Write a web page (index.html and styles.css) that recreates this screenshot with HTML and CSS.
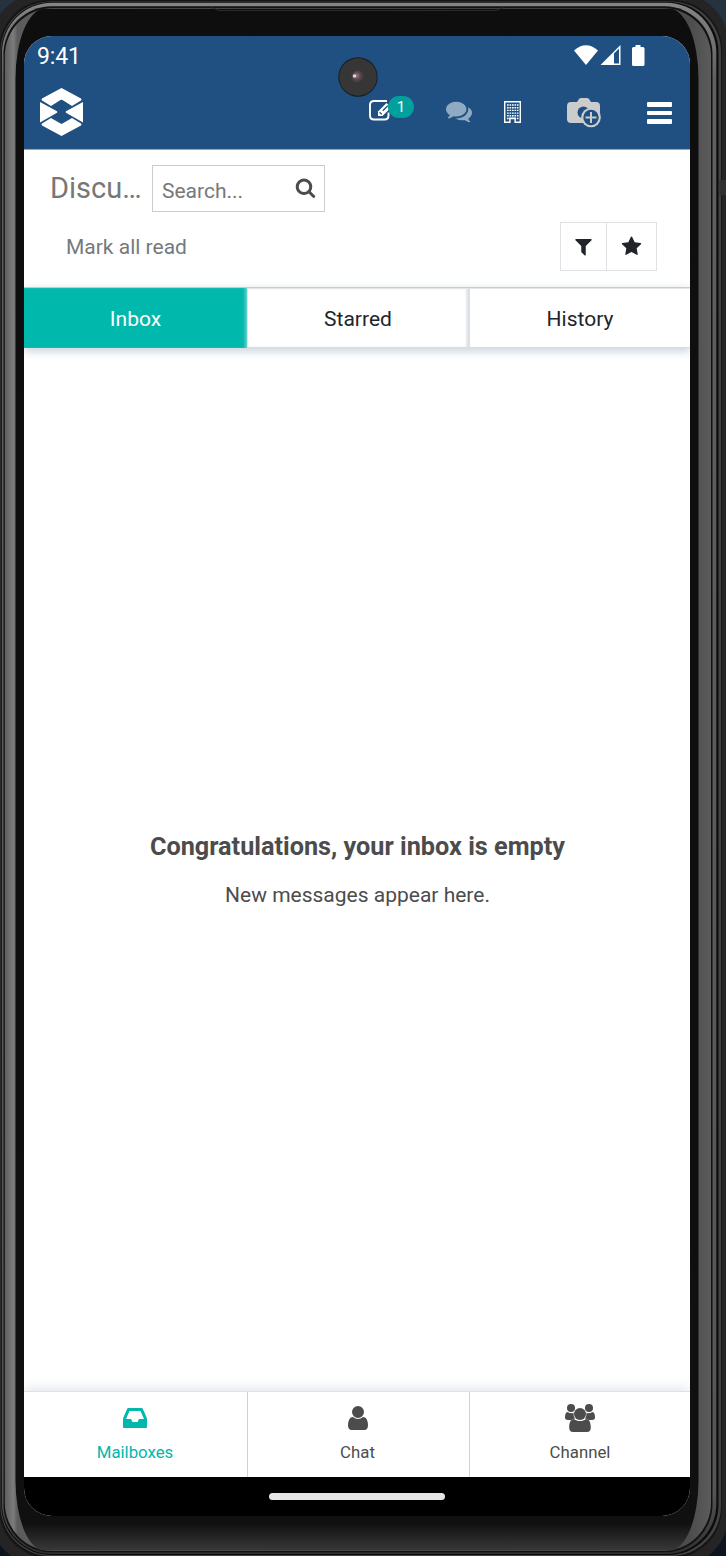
FILE: index.html
```html
<!DOCTYPE html>
<html lang="en">
<head>
<meta charset="utf-8">
<title>Discuss</title>
<link rel="stylesheet" href="styles.css">
</head>
<body>
<div class="device">
  <svg class="frame" viewBox="0 0 726 1556" aria-hidden="true">
    <defs>
      <linearGradient id="side" x1="0" x2="1" y1="0" y2="0">
        <stop offset="0" stop-color="#5e5e5e"/><stop offset=".012" stop-color="#7c7c7c"/><stop offset=".018" stop-color="#5c5c5c"/>
        <stop offset=".97" stop-color="#4c4c4c"/><stop offset="1" stop-color="#5c5c5c"/>
      </linearGradient>
      <linearGradient id="bezel" x1="0" x2="0" y1="0" y2="1">
        <stop offset="0" stop-color="#0e0e0e"/><stop offset=".982" stop-color="#101010"/><stop offset="1" stop-color="#383838"/>
      </linearGradient>
      <linearGradient id="rim" x1="0" x2="0" y1="0" y2="1">
        <stop offset="0" stop-color="#858585"/><stop offset=".05" stop-color="#606060"/><stop offset=".96" stop-color="#555"/><stop offset="1" stop-color="#303030"/>
      </linearGradient>
    </defs>
    <rect x="-9" y="-7" width="737" height="1573" rx="50" fill="#242424"/>
    <rect x="-1" y="0" width="723" height="1558" rx="50" fill="#151515"/>
    <rect x="0.5" y="1.5" width="720.5" height="1554.5" rx="50" fill="#424242"/>
    <rect x="1.3" y="2" width="717.2" height="1553" rx="50" fill="#0c0c0c"/>
    <rect x="2" y="2.7" width="714.3" height="1551.3" rx="50" fill="url(#rim)"/>
    <rect x="3.5" y="6.3" width="709" height="1546" rx="48" fill="#121212"/>
    <rect x="4.8" y="8" width="706.2" height="1543" rx="48" fill="url(#side)"/>
    <rect x="15.5" y="8.8" width="683" height="1541.7" rx="29" ry="70" fill="url(#bezel)"/>
    <path d="M211 8h3l4 2.5h279l4-2.5h3" fill="none" stroke="#2b2b2b"/>
    <path d="M719.5 180h6.5v15h-6.5z" fill="#303030"/>
  </svg>
  <div class="screen">
    <header class="header">
      <div class="status">
        <span class="clock">9:41</span>
        <svg class="status-icons" viewBox="0 0 72 24">
          <path d="M0 6.5Q12-4 24 6.5L12 21Z"/>
          <path d="M26.500 21L46.500 1V21Z"/>
          <path class="signal-gap" d="M40 9.500L45 4.500V19.500H40Z"/>
          <path d="M61.500 1h5v2h2.500q1.500 0 1.500 1.500v16q0 1.500-1.500 1.500h-9.500q-1.500 0-1.500-1.500v-16q0-1.500 1.500-1.500h2Z"/>
        </svg>
      </div>
      <nav class="nav">
        <svg class="logo" viewBox="0 0 43 48">
          <path d="M21.500 0L41 10.500Q42 11.500 41 12.500L32 18L22.500 12Q21.500 11.500 20.500 12L11 18L2 12.500Q1 11.500 2 10.500Z"/>
          <path d="M21.500 48L41 37.500Q42 36.500 41 35.500L32 30L22.500 35.500Q21.500 36 20.500 35.500L11 30L2 35.500Q1 36.500 2 37.500Z"/>
          <path d="M0 14L17 23.200Q17.700 24 17 24.700L0 34.500ZM43 14L26 23.200Q25.300 24 26 24.700L43 34.500Z"/>
        </svg>
        <div class="note">
          <svg class="edit" viewBox="0 0 23 22">
            <path class="line" d="M18 1H5Q1 1 1 5v10.500Q1 19.500 5 19.500h10.500Q19.500 19.500 19.500 15.500v-3"/>
            <path d="M9 11.500L17.500 3l4.500 4.500L13.500 16H9Z"/>
            <path class="detail" d="M10.600 12.200l2.200 2.200M13.800 10.800l5-5"/>
          </svg>
          <span class="badge">1</span>
        </div>
        <svg class="comments" viewBox="0 0 1792 1792"><path d="M1408 768q0 139-94 257t-256.500 186.500-353.500 68.500q-86 0-176-16-124 88-278 128-36 9-86 16h-3q-11 0-20.500-8t-11.500-21q-1-3-1-6.500t.5-6.500 2-6l2.500-5 3.500-5.500 4-5 4.500-5 4-4.500q5-6 23-25t26-29.500 22.500-29 25-38.500 20.500-44q-124-72-195-177t-71-224q0-139 94-257t256.500-186.500 353.500-68.500 353.500 68.500 256.500 186.500 94 257zm384 256q0 120-71 224.500t-195 176.500q10 24 20.500 44t25 38.500 22.500 29 26 29.500 23 25q1 1 4 4.500t4.500 5 4 5 3.500 5.500l2.500 5 2 6 .5 6.500-1 6.500q-3 14-13 22t-22 7q-50-7-86-16-154-40-278-128-90 16-176 16-271 0-472-132 58 4 88 4 161 0 309-45t264-129q125-92 192-212t67-254q0-77-23-152 129 71 204 178t75 230z"/></svg>
        <svg class="building" viewBox="0 0 17 22">
          <path class="wall" d="M.7 .7h15.600v20.600H.7Z"/>
          <path class="windows" d="M3 4h11.500M3 6.700h11.500M3 9.400h11.500M3 12.100h11.500M3 14.800h11.500M3 17.500h11.500"/>
          <path d="M5.200 16.600h6.600V22H5.200Z"/><path class="hole" d="M6.600 18.300h3.800V22H6.600Z"/>
        </svg>
        <svg class="camera" viewBox="0 0 34 30">
          <path d="M4 4h6l2-3q.7-1 2-1h6q1.300 0 2 1l2 3h5q4 0 4 4v13q0 4-4 4H4q-4 0-4-4V8q0-4 4-4Z"/>
          <circle class="hole" cx="16.500" cy="14.500" r="6"/>
          <circle cx="24" cy="19.500" r="9.800"/><circle class="hole" cx="24" cy="19.500" r="7.700"/>
          <path class="plus" d="M24 14v11M18.500 19.500h11"/>
        </svg>
        <div class="burger"><i></i><i></i><i></i></div>
      </nav>
    </header>
    <section class="controls">
      <div class="search-row">
        <h1 class="title">Discu…</h1>
        <div class="search"><span>Search...</span>
          <svg viewBox="0 0 1792 1792"><path d="M1216 832q0-185-131.500-316.500t-316.500-131.500-316.500 131.500-131.500 316.500 131.500 316.500 316.500 131.500 316.500-131.500 131.500-316.500zm512 832q0 52-38 90t-90 38q-54 0-90-38l-343-342q-179 124-399 124-143 0-273.500-55.500t-225-150-150-225-55.500-273.500 55.500-273.500 150-225 225-150 273.500-55.500 273.500 55.500 225 150 150 225 55.500 273.500q0 220-124 399l343 343q37 37 37 90z"/></svg>
        </div>
      </div>
      <div class="action-row">
        <span class="mark">Mark all read</span>
        <div class="filters">
          <span class="filter"><svg viewBox="0 0 1792 1792"><path d="M1595 295q17 41-14 70l-493 493v742q0 42-39 59-13 5-25 5-27 0-45-19l-256-256q-19-19-19-45v-486l-493-493q-31-29-14-70 17-39 59-39h1280q42 0 59 39z"/></svg></span>
          <span class="filter wide"><svg viewBox="0 0 1792 1792"><path d="M1728 647q0 22-26 48l-363 354 86 500q1 7 1 20 0 21-10.500 35.500t-30.500 14.500q-19 0-40-12l-449-236-449 236q-22 12-40 12-21 0-31.500-14.500t-10.500-35.500q0-6 2-20l86-500-364-354q-25-27-25-48 0-37 56-46l502-73 225-455q19-41 49-41t49 41l225 455 502 73q56 9 56 46z"/></svg></span>
        </div>
      </div>
    </section>
    <div class="tabs">
      <span class="tab active">Inbox</span>
      <span class="tab">Starred</span>
      <span class="tab">History</span>
    </div>
    <main class="empty">
      <h2>Congratulations, your inbox is empty</h2>
      <p>New messages appear here.</p>
    </main>
    <nav class="bottom">
      <div class="item active">
        <svg viewBox="0 0 1792 1792"><path fill-rule="evenodd" d="M1151 960h316q-1-3-2.500-8t-2.500-8l-212-496h-708l-212 496q-1 2-2.500 8t-2.500 8h316l95 192h320zm513 30v482q0 26-19 45t-45 19h-1408q-26 0-45-19t-19-45v-482q0-62 25-123l238-552q10-25 36.500-42t52.500-17h832q26 0 52.500 17t36.500 42l238 552q25 61 25 123z"/></svg>
        <span>Mailboxes</span>
      </div>
      <div class="item">
        <svg viewBox="0 0 1792 1792"><path d="M1536 1399q0 109-62.500 187t-150.500 78h-854q-88 0-150.500-78t-62.500-187q0-85 8.500-160.500t31.500-152 58.500-131 94-89 134.500-34.500q131 128 313 128t313-128q76 0 134.500 34.500t94 89 58.500 131 31.500 152 8.500 160.500zm-256-887q0 159-112.500 271.500t-271.500 112.500-271.500-112.500-112.500-271.500 112.500-271.500 271.500-112.500 271.500 112.500 112.500 271.500z"/></svg>
        <span>Chat</span>
      </div>
      <div class="item">
        <svg class="users" viewBox="0 0 30 28">
          <circle cx="6" cy="4" r="4"/><circle cx="24" cy="4" r="4"/>
          <path d="M2.500 8Q6 10.200 8.600 8.800q-.4 3.600 1.400 5.600Q8 14.600 6.500 16H3.200Q0 16 0 13.500 0 8.300 2.500 8ZM27.500 8Q24 10.200 21.400 8.800q.4 3.600-1.400 5.600Q22 14.600 23.500 16h3.300Q30 16 30 13.500 30 8.300 27.500 8Z"/>
          <circle cx="15" cy="10" r="6"/>
          <path d="M9 15C12.500 17.800 17.500 17.800 21 15 24.500 15 25.800 18.500 25.800 23.700 25.800 26.500 24.300 28 22 28H8C5.700 28 4.200 26.500 4.200 23.700 4.200 18.500 5.500 15 9 15Z"/>
        </svg>
        <span>Channel</span>
      </div>
    </nav>
    <div class="gesture"><i></i></div>
    <svg class="lens-cutout" viewBox="0 0 40 40">
      <defs><radialGradient id="glass" cx=".4" cy=".4" r=".6"><stop offset="0" stop-color="#8b7f86"/><stop offset=".5" stop-color="#59464b"/><stop offset="1" stop-color="#373332"/></radialGradient></defs>
      <circle cx="20" cy="20" r="19.700" fill="#161a1f"/><circle cx="20" cy="20" r="18.800" fill="#363636"/>
      <circle cx="20" cy="20" r="6.500" fill="url(#glass)"/><circle cx="16.500" cy="19" r="1.800" fill="#d8d4e2"/>
    </svg>
  </div>
</div>
</body>
</html>
```
FILE: styles.css
```css
* { box-sizing: border-box; }
body { margin: 0; background: linear-gradient(#26333f, #0c151d); font-family: Roboto, "Liberation Sans", sans-serif; color: #4c4c4c; }
h1, h2, p { margin: 0; font-weight: 400; }
svg { display: block; fill: currentColor; flex: none; }

.device { display: grid; width: 726px; height: 1556px; overflow: hidden; }
.frame, .screen { grid-area: 1 / 1; }
.frame { width: 726px; height: 1556px; }
.screen { position: relative; display: flex; flex-direction: column; width: 666px; height: 1480px; margin: 36px 0 0 24px; border-radius: 28px; overflow: hidden; background: #fff; }

.header { height: 114px; background: #205081; border-bottom: 1px solid #91a8c0; color: #fff; }
.status { display: flex; justify-content: space-between; height: 40px; padding: 7px 44px 0 13px; }
.clock { font-size: 23px; line-height: 28px; letter-spacing: -.1px; }
.status-icons { width: 72px; height: 24px; margin-top: 1px; }
.signal-gap { fill: #205081; }
.nav { display: flex; height: 73px; padding-left: 16px; }
.logo { width: 43px; height: 48px; margin-top: 12px; }
.note { position: relative; width: 45px; margin: 24px 0 0 286px; }
.edit { width: 23px; height: 22px; }
.line { fill: none; stroke: #fff; stroke-width: 1.900; }
.detail { fill: none; stroke: #205081; stroke-width: 1.300; }
.badge { position: absolute; left: 19px; top: -4px; width: 26px; height: 22px; border-radius: 11px; background: #00a09d; font-size: 15px; line-height: 23px; text-align: center; }
.comments { width: 26px; height: 26px; margin: 22px 0 0 32px; color: #91aac4; }
.building { width: 17px; height: 22px; margin: 25px 0 0 32px; }
.wall { fill: #205081; stroke: #fff; stroke-width: 1.400; }
.windows { fill: none; stroke: #fff; stroke-width: 1.400; stroke-dasharray: 1.700 .8; }
.camera { width: 34px; height: 30px; margin: 22px 0 0 46px; color: #ccc; }
.hole { fill: #205081; }
.plus { fill: none; stroke: #ccc; stroke-width: 2; }
.burger { display: flex; flex-direction: column; gap: 4px; width: 25px; margin: 26px 0 0 46px; }
.burger i { height: 4.500px; background: #fff; border-radius: 1px; }

.controls { height: 137px; padding: 15px 33px 0 26px; }
.search-row { display: flex; height: 47px; }
.title { width: 102px; padding-top: 5px; font-size: 29px; line-height: 36px; color: #777; }
.search { display: flex; justify-content: space-between; width: 173px; height: 47px; padding: 11px 8px 0 9px; border: 1px solid #ccc; color: #777; font-size: 21px; line-height: 28px; }
.search svg { width: 21px; height: 21px; color: #4c4c4c; }
.action-row { display: flex; justify-content: space-between; margin-top: 10px; padding-left: 16px; }
.mark { padding-top: 11px; font-size: 21px; line-height: 28px; color: #75797d; }
.filters { display: flex; height: 49px; border: 1px solid #dee2e6; color: #212529; }
.filter { display: flex; width: 45px; align-items: center; justify-content: center; }
.filter.wide { width: 50px; border-left: 1px solid #dee2e6; }
.filter svg { width: 21px; height: 21px; }

.tabs { display: grid; grid-template: 60px / 223px 222px 221px; height: 61px; border-top: 1px solid #c8ccd0; box-shadow: 0 3px 9px #c8d0d8; }
.tab { border-right: 1px solid #d9dee3; border-top: 1px solid #e3e6ea; border-bottom: 1px solid #d9dee3; font-size: 21px; line-height: 60px; text-align: center; color: #212529; box-shadow: inset -2px 0 2px #e3e6ea; }
.tab + .tab { border-left: 1px solid #dee2e6; }
.tab:last-child { border-right: 0; box-shadow: none; }
.tab.active { border: 0; background: #00b8ab; line-height: 62px; box-shadow: inset -3px 0 3px -1px #6cd0c9; color: #fff; }

.empty { flex: 1; padding: 482px 0 0 1px; text-align: center; }
.empty h2 { font-size: 25.250px; font-weight: 700; line-height: 34px; }
.empty p { margin-top: 17px; font-size: 21px; line-height: 28px; }

.bottom { display: grid; grid-template-columns: 223px 222px 221px; height: 86px; border-top: 1px solid #dee2e6; box-shadow: 0 -2px 12px #dde2e6; }
.item { display: flex; flex-direction: column; align-items: center; padding: 12px 1px 0 0; font-size: 16.800px; line-height: 25px; }
.item + .item { padding-right: 2px; border-left: 1px solid #cdd3d8; }
.item:last-child { padding-right: 0; }
.item svg { width: 28px; height: 28px; margin-bottom: 8px; }
.item .users { width: 30px; }
.item.active { color: #00b8ab; }

.gesture { display: flex; height: 39px; justify-content: center; align-items: center; background: #000; }
.gesture i { width: 176px; height: 7px; border-radius: 4px; background: #e7e5e6; }
.lens-cutout { position: absolute; left: 313.500px; top: 20.500px; width: 40px; height: 40px; }
```
